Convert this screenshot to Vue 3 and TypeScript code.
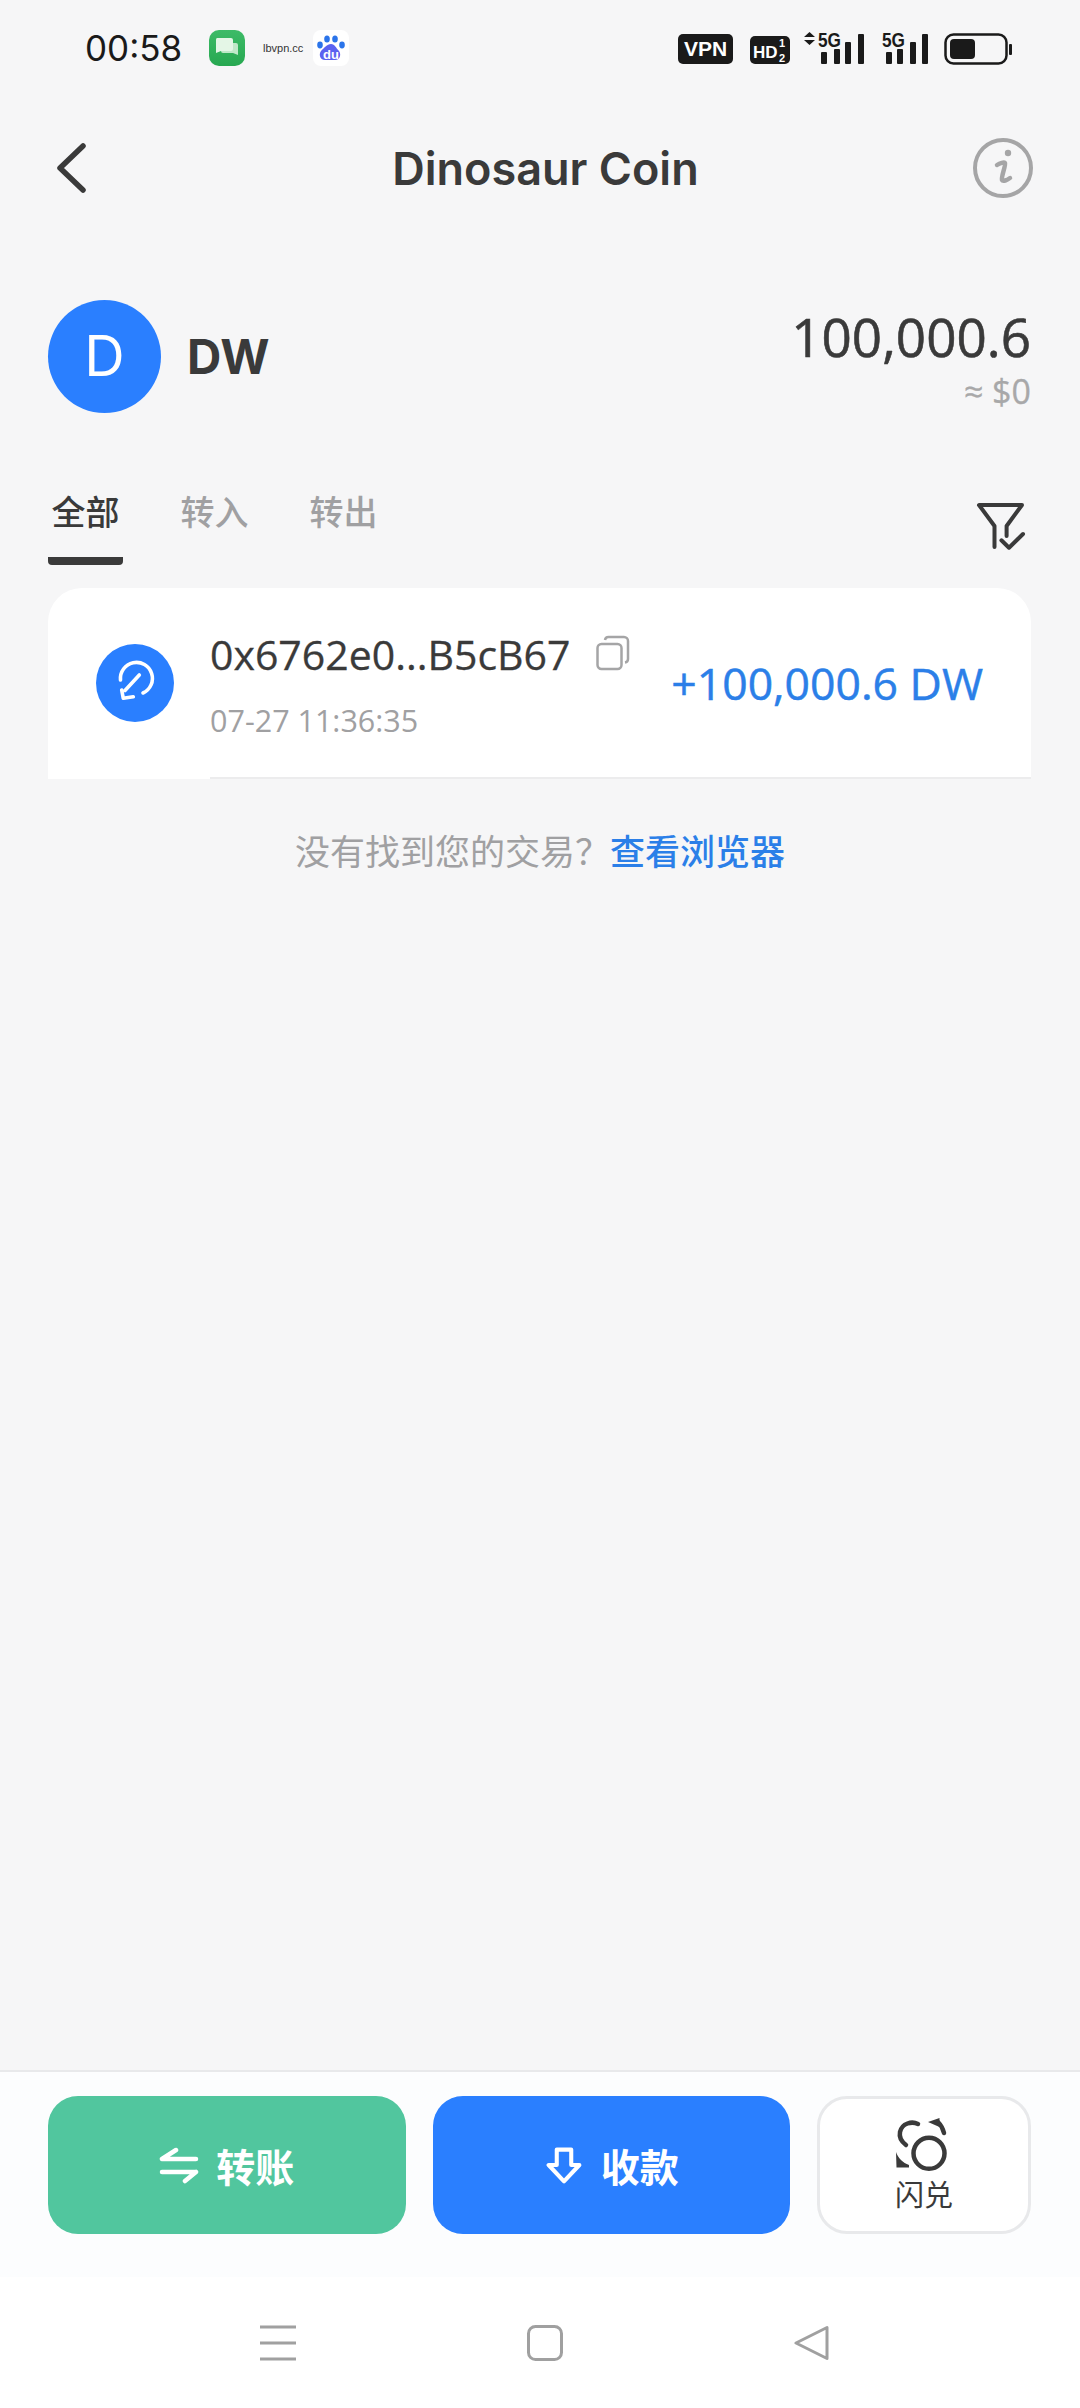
<script setup lang="ts">
import { ref } from 'vue'

const tabs: string[] = ['全部', '转入', '转出']
const activeTab = ref(0)
</script>

<template>
  <div class="page">
    <div class="status-bar">
      <span class="time">00:58</span>
      <svg class="app-icon" viewBox="0 0 36 36">
        <defs>
          <linearGradient id="msg" x1="0" y1="0" x2="0" y2="1">
            <stop offset="0" stop-color="#3dbb67" />
            <stop offset="1" stop-color="#27a851" />
          </linearGradient>
        </defs>
        <rect width="36" height="36" rx="10" fill="url(#msg)" />
        <path d="M13 13h14a2 2 0 0 1 2 2v10l-5-2H14a2 2 0 0 1-2-2z" fill="#bfe8c8" />
        <path d="M8 8h14a2 2 0 0 1 2 2v9a2 2 0 0 1-2 2H12l-5 2V10a2 2 0 0 1 1-2z" fill="#e4f6e6" />
      </svg>
      <span class="vpn-label">lbvpn.cc</span>
      <svg class="app-icon" viewBox="0 0 36 36">
        <rect width="36" height="36" rx="8" fill="#fff" />
        <ellipse cx="7" cy="15" rx="2.8" ry="3.4" fill="#2b74ea" />
        <ellipse cx="14" cy="9" rx="2.8" ry="3.6" fill="#2b74ea" />
        <ellipse cx="22" cy="9" rx="2.8" ry="3.6" fill="#2b74ea" />
        <ellipse cx="29" cy="15" rx="2.8" ry="3.4" fill="#2b74ea" />
        <path d="M18 14c4 0 5 4 8 7 3 4 0 10-5 9H13c-5 1-8-5-5-9 3-3 6-7 10-7z" fill="#5b62f0" />
        <text x="18" y="29" text-anchor="middle" class="du">du</text>
      </svg>
      <div class="status-right">
        <span class="badge-vpn">VPN</span>
        <svg class="badge-hd" viewBox="0 0 40 28">
          <rect width="40" height="28" rx="5" fill="#1a1a1a" />
          <text x="3" y="22" class="hd-text">HD</text>
          <text x="29" y="10.500" class="hd-frac">1</text>
          <text x="29" y="25.500" class="hd-frac">2</text>
        </svg>
        <svg class="signal-a" viewBox="0 0 62 34">
          <path d="M0 6l5.500-5 5.500 5zM0 9l5.500 5 5.500-5z" fill="#1a1a1a" />
          <text x="14" y="16" textLength="23" lengthAdjust="spacingAndGlyphs" class="five-g">5G</text>
          <g fill="#1a1a1a">
            <rect x="17" y="21" width="6" height="12" rx="1" />
            <rect x="30" y="18" width="6" height="15" rx="1" />
            <rect x="41" y="11" width="6" height="22" rx="1" />
            <rect x="54" y="3" width="6" height="30" rx="1" />
          </g>
        </svg>
        <svg class="signal-b" viewBox="0 0 48 34">
          <text x="1" y="16" textLength="23" lengthAdjust="spacingAndGlyphs" class="five-g">5G</text>
          <g fill="#1a1a1a">
            <rect x="5" y="21" width="6" height="12" rx="1" />
            <rect x="16" y="18" width="6" height="15" rx="1" />
            <rect x="29" y="11" width="6" height="22" rx="1" />
            <rect x="41" y="3" width="6" height="30" rx="1" />
          </g>
        </svg>
        <svg class="battery" viewBox="0 0 68 32">
          <rect x="1.500" y="1.500" width="61" height="29" rx="8" fill="none" stroke="#1a1a1a" stroke-width="2.500" />
          <rect x="6" y="6" width="25" height="20" rx="4" fill="#1a1a1a" />
          <rect x="65" y="11" width="3" height="11" rx="1" fill="#1a1a1a" />
        </svg>
      </div>
    </div>

    <div class="header">
      <svg class="back" viewBox="0 0 30 50">
        <path d="M27 3L4 25l23 22" fill="none" stroke="#3a3a3a" stroke-width="5.500" stroke-linecap="round" stroke-linejoin="round" />
      </svg>
      <div class="title">Dinosaur Coin</div>
      <svg class="info" viewBox="0 0 60 60">
        <circle cx="30" cy="30" r="28" fill="none" stroke="#a5a5a6" stroke-width="4" />
        <circle cx="35" cy="15" r="3.200" fill="#a5a5a6" />
        <path d="M24 27c3-2 7-3 8-2 1 2-4 14-3 17 1 2 5 0 8-2" fill="none" stroke="#a5a5a6" stroke-width="4.500" stroke-linecap="round" />
      </svg>
    </div>

    <div class="token">
      <div class="avatar">D</div>
      <div class="symbol">DW</div>
      <div class="balance">
        <div class="amount">100,000.6</div>
        <div class="fiat">≈ $0</div>
      </div>
    </div>

    <div class="tabs-row">
      <div class="tabs">
        <div
          v-for="(tab, i) in tabs"
          :key="tab"
          class="tab"
          :class="{ active: i === activeTab }"
        >
          {{ tab }}
        </div>
      </div>
      <svg class="filter" viewBox="0 0 52 52">
        <path d="M19.500 46V25L4 4h43L31.600 25v10" fill="none" stroke="#3a3a3a" stroke-width="4" stroke-linecap="round" stroke-linejoin="round" />
        <path d="M26.400 39.300l7.600 7.400L48 33" fill="none" stroke="#3a3a3a" stroke-width="4" stroke-linecap="round" stroke-linejoin="round" />
      </svg>
    </div>

    <div class="card">
      <svg class="tx-icon" viewBox="0 0 78 78">
        <circle cx="39" cy="39" r="39" fill="#2a7fff" />
        <path d="M24.500 36A16 16 0 1 1 47 49" fill="none" stroke="#fff" stroke-width="3.600" stroke-linecap="round" />
        <path d="M43.300 31L29 46.500M25.700 46l1.600 8.300 10-1.600" fill="none" stroke="#fff" stroke-width="3.600" stroke-linecap="round" stroke-linejoin="round" />
      </svg>
      <div class="tx-body">
        <div class="tx-text">
          <div class="tx-address">
            <span>0x6762e0...B5cB67</span>
            <svg class="copy" viewBox="0 0 34 36">
              <rect x="1.500" y="9" width="24" height="25" rx="4" fill="none" stroke="#a5a5a6" stroke-width="2.500" />
              <path d="M9 5a3.500 3.500 0 0 1 3.500-3H28a4 4 0 0 1 4 4v18a3.500 3.500 0 0 1-3 3.500" fill="none" stroke="#a5a5a6" stroke-width="2.500" />
            </svg>
          </div>
          <div class="tx-date">07-27 11:36:35</div>
        </div>
        <div class="tx-amount">+100,000.6 DW</div>
      </div>
    </div>

    <div class="hint">没有找到您的交易？<span class="hint-link">查看浏览器</span></div>

    <div class="actions">
      <div class="btn green">
        <svg class="btn-icon" viewBox="0 0 40 38">
          <path d="M3 13h34M3 13L17 4M3 26h34M37 26l-11 9" fill="none" stroke="#fff" stroke-width="4.500" stroke-linecap="round" />
        </svg>
        转账
      </div>
      <div class="btn blue">
        <svg class="btn-icon" viewBox="0 0 44 42">
          <path d="M14 4h16v17h9L22 39 5 21h9z" fill="none" stroke="#fff" stroke-width="4.500" stroke-linejoin="round" />
        </svg>
        收款
      </div>
      <div class="swap">
        <svg class="swap-icon" viewBox="0 0 68 68">
          <circle cx="41" cy="43.300" r="15.500" fill="none" stroke="#3a3a3a" stroke-width="4.500" />
          <path d="M30 14C24 11 14 13 12 22c-1 5 2 10 6 13" fill="none" stroke="#3a3a3a" stroke-width="4.500" stroke-linecap="round" />
          <path d="M50 12c3 3 5 7 6 11" fill="none" stroke="#3a3a3a" stroke-width="4.500" stroke-linecap="round" />
          <path d="M40 12l11.500-4v9z" fill="#3a3a3a" />
          <path d="M8 42c2 6 7 11 13 13v2.500H8.500z" fill="#3a3a3a" />
        </svg>
        <span>闪兑</span>
      </div>
    </div>

    <div class="nav-bar">
      <svg class="nav-icon" viewBox="0 0 36 36">
        <path d="M0 2h36M0 18h36M0 34h36" stroke="#a0a0a0" stroke-width="3" />
      </svg>
      <svg class="nav-icon" viewBox="0 0 36 36">
        <rect x="1.500" y="1.500" width="33" height="33" rx="7" fill="none" stroke="#a0a0a0" stroke-width="3" />
      </svg>
      <svg class="nav-icon" viewBox="0 0 36 36">
        <path d="M33 2.500v31L2 18z" fill="none" stroke="#a0a0a0" stroke-width="3" stroke-linejoin="round" />
      </svg>
    </div>
  </div>
</template>

<style>
html,
body {
  margin: 0;
  background: #f6f6f7;
}
</style>

<style scoped>
.page {
  width: 1080px;
  height: 2408px;
  display: flex;
  flex-direction: column;
  background: #f6f6f7;
  color: #3a3a3a;
  font-family: "Open Sans", "Noto Sans CJK SC", sans-serif;
  overflow: hidden;
}

.status-bar {
  height: 96px;
  display: flex;
  align-items: center;
  padding-left: 85px;
  box-sizing: border-box;
}
.time {
  font-family: Inter, sans-serif;
  font-size: 35px;
  color: #1a1a1a;
  width: 124px;
}
.app-icon {
  width: 36px;
  height: 36px;
}
.vpn-label {
  font-family: "Liberation Sans", sans-serif;
  font-size: 11px;
  color: #333;
  margin: 0 18px 0 18px;
  width: 32px;
  white-space: nowrap;
}
.du {
  font-family: "Liberation Sans", sans-serif;
  font-size: 13px;
  font-weight: 700;
  fill: #fff;
}
.status-right {
  margin-left: auto;
  margin-right: 68px;
  display: flex;
  align-items: flex-end;
  height: 34px;
}
.badge-vpn {
  width: 55px;
  height: 30px;
  margin-bottom: 1px;
  border-radius: 5px;
  background: #1a1a1a;
  color: #fff;
  font-family: "Liberation Sans", sans-serif;
  font-weight: 700;
  font-size: 21px;
  line-height: 30px;
  text-align: center;
}
.badge-hd {
  width: 40px;
  height: 28px;
  margin: 0 14px 1px 17px;
}
.hd-text {
  font-family: "Liberation Sans", sans-serif;
  font-weight: 700;
  font-size: 17px;
  fill: #fff;
}
.hd-frac {
  font-family: "Liberation Sans", sans-serif;
  font-weight: 700;
  font-size: 11px;
  fill: #fff;
}
.five-g {
  font-family: "Liberation Sans", sans-serif;
  font-weight: 700;
  font-size: 21px;
  fill: #1a1a1a;
}
.signal-a {
  width: 62px;
  height: 34px;
  overflow: visible;
}
.signal-b {
  width: 48px;
  height: 34px;
  margin-left: 15px;
  overflow: visible;
}
.battery {
  width: 68px;
  height: 32px;
  margin-left: 15px;
}

.header {
  height: 74px;
  margin-top: 34px;
  padding: 0 47px 0 58px;
  display: grid;
  grid-template-columns: 1fr auto 1fr;
  align-items: center;
}
.back {
  width: 30px;
  height: 50px;
  margin-left: -2px;
}
.title {
  font-family: Inter, sans-serif;
  font-size: 45px;
  font-weight: 600;
  line-height: 74px;
  padding-top: 2px;
  white-space: nowrap;
}
.info {
  width: 60px;
  height: 60px;
  justify-self: end;
}

.token {
  height: 113px;
  margin-top: 96px;
  padding: 0 49px 0 48px;
  display: flex;
  align-items: center;
}
.avatar {
  width: 113px;
  height: 113px;
  border-radius: 50%;
  background: #2a7fff;
  color: #fff;
  font-family: Inter, sans-serif;
  font-size: 56px;
  line-height: 113px;
  text-align: center;
}
.symbol {
  margin-left: 26px;
  font-family: Inter, sans-serif;
  font-size: 47.500px;
  font-weight: 700;
}
.balance {
  margin-left: auto;
  text-align: right;
  align-self: flex-start;
}
.amount {
  margin-top: 7px;
  font-size: 53px;
  font-weight: 500;
  line-height: 60px;
  -webkit-text-stroke: 0.6px #3a3a3a;
}
.fiat {
  margin-top: 4px;
  font-size: 34px;
  line-height: 40px;
  color: #a8a8a9;
  -webkit-text-stroke: 0.3px #a8a8a9;
}

.tabs-row {
  margin-top: 77px;
  padding: 0 53px 0 48px;
  display: flex;
  justify-content: space-between;
  align-items: flex-start;
}
.tabs {
  display: flex;
  gap: 54px;
}
.tab {
  width: 75px;
  height: 75px;
  box-sizing: border-box;
  font-size: 34px;
  font-weight: 500;
  line-height: 44px;
  text-align: center;
  color: #a0a0a2;
}
.tab.active {
  color: #3a3a3a;
  border-bottom: 8px solid #3a3a3a;
  border-radius: 0 0 4px 4px;
}
.filter {
  width: 52px;
  height: 52px;
  margin-top: 11px;
}

.card {
  margin: 23px 49px 0 48px;
  height: 191px;
  display: flex;
  align-items: stretch;
  background: #fff;
  border-radius: 34px 34px 0 0;
}
.tx-icon {
  width: 78px;
  height: 78px;
  margin: 56px 36px 0 48px;
}
.tx-body {
  flex: 1;
  display: flex;
  justify-content: space-between;
  align-items: center;
  padding-right: 48px;
  border-bottom: 2px solid #ececed;
}
.tx-text {
  padding-top: 3px;
}
.tx-address {
  display: flex;
  align-items: flex-start;
  font-size: 41px;
  line-height: 50px;
  white-space: nowrap;
  -webkit-text-stroke: 0.3px #3a3a3a;
}
.copy {
  width: 34px;
  height: 36px;
  margin-left: 26px;
  margin-top: 6px;
}
.tx-date {
  margin-top: 21px;
  font-size: 30.5px;
  line-height: 40px;
  color: #a0a0a2;
  white-space: nowrap;
}
.tx-amount {
  font-size: 44.5px;
  font-weight: 500;
  color: #2b7fe8;
  white-space: nowrap;
  -webkit-text-stroke: 0.5px #2b7fe8;
}

.hint {
  margin-top: 50px;
  font-size: 35px;
  line-height: 46px;
  text-align: center;
  color: #a0a0a2;
}
.hint-link {
  color: #2b7fe8;
  font-weight: 500;
}

.actions {
  margin-top: auto;
  height: 207px;
  padding: 24px 49px 0 48px;
  box-sizing: border-box;
  border-top: 2px solid #e8e9eb;
  background: #fcfdfe;
  display: grid;
  grid-template-columns: 1fr 1fr 214px;
  grid-template-rows: 138px;
  gap: 27px;
}
.btn {
  border-radius: 30px;
  display: flex;
  align-items: center;
  justify-content: center;
  gap: 17px;
  color: #fff;
  font-size: 39px;
  font-weight: 700;
}
.btn.green {
  background: #51c69e;
}
.btn.blue {
  background: #2a7fff;
}
.btn-icon {
  width: 40px;
  height: 38px;
}
.swap {
  border: 3px solid #e8e9eb;
  border-radius: 30px;
  background: #fff;
  display: flex;
  flex-direction: column;
  align-items: center;
  font-size: 29px;
  line-height: 34px;
}
.swap-icon {
  width: 68px;
  height: 68px;
  margin-top: 11px;
  margin-left: -4px;
}

.nav-bar {
  height: 131px;
  background: #fff;
  padding: 0 250px 0 260px;
  display: flex;
  justify-content: space-between;
  align-items: center;
}
.nav-icon {
  width: 36px;
  height: 36px;
}
</style>
